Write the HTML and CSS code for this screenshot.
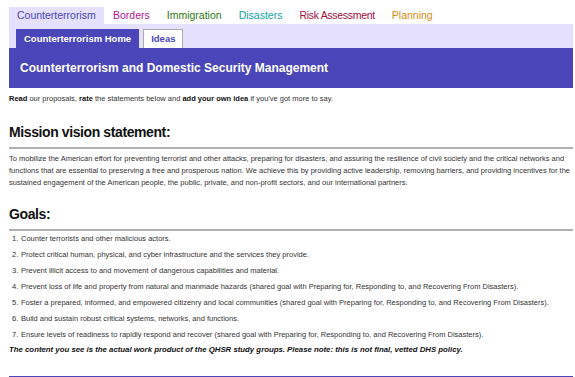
FILE: index.html
```html
<!DOCTYPE html>
<html>
<head>
<meta charset="utf-8">
<link rel="stylesheet" href="styles.css">
</head>
<body>
<div class="page">
  <nav class="topnav">
    <span class="tab active">Counterterrorism</span>
    <span class="tab c-borders">Borders</span>
    <span class="tab c-immig">Immigration</span>
    <span class="tab c-dis">Disasters</span>
    <span class="tab c-risk">Risk Assessment</span>
    <span class="tab c-plan">Planning</span>
  </nav>
  <div class="subnav">
    <span class="subtab current">Counterterrorism Home</span>
    <span class="subtab">Ideas</span>
  </div>
  <div class="banner">Counterterrorism and Domestic Security Management</div>
  <p class="intro"><b>Read</b> our proposals, <b>rate</b> the statements below and <b>add your own idea</b> if you've got more to say.</p>
  <h2 class="heading">Mission vision statement:</h2>
  <p class="mission">To mobilize the American effort for preventing terrorist and other attacks, preparing for disasters, and assuring the resilience of civil society and the critical networks and functions that are essential to preserving a free and prosperous nation. We achieve this by providing active leadership, removing barriers, and providing incentives for the sustained engagement of the American people, the public, private, and non-profit sectors, and our international partners.</p>
  <h2 class="heading goals-h">Goals:</h2>
  <ol class="goals">
    <li>Counter terrorists and other malicious actors.</li>
    <li>Protect critical human, physical, and cyber infrastructure and the services they provide.</li>
    <li>Prevent illicit access to and movement of dangerous capabilities and material.</li>
    <li>Prevent loss of life and property from natural and manmade hazards (shared goal with Preparing for, Responding to, and Recovering From Disasters).</li>
    <li>Foster a prepared, informed, and empowered citizenry and local communities (shared goal with Preparing for, Responding to, and Recovering From Disasters).</li>
    <li>Build and sustain robust critical systems, networks, and functions.</li>
    <li>Ensure levels of readiness to rapidly respond and recover (shared goal with Preparing for, Responding to, and Recovering From Disasters).</li>
  </ol>
  <p class="note">The content you see is the actual work product of the QHSR study groups. Please note: this is not final, vetted DHS policy.</p>
  <div class="bottomline"></div>
</div>
</body>
</html>
```
FILE: styles.css
```css
html, body {
  margin: 0;
  padding: 0;
  background: #fff;
}
body {
  font-family: "Liberation Sans", Arial, sans-serif;
  color: #222;
}
.page {
  margin-left: 9px;
  width: 564px;
}
.topnav {
  display: flex;
  margin-top: 7px;
  height: 17px;
  font-size: 10.5px;
}
.tab {
  padding: 0 8px;
  line-height: 17px;
  margin-left: 1px;
}
.tab.active {
  background: #e4e0fd;
  color: #4a46b9;
  width: 79px;
  margin-left: 0;
}
.c-borders { color: #b0159a; }
.c-immig { color: #2c7a0c; }
.c-dis { color: #10a2a6; }
.c-risk { color: #a30d3a; letter-spacing: -0.3px; }
.c-plan { color: #d48b10; }
.subnav {
  background: #e4e0fd;
  height: 24px;
  display: flex;
  align-items: flex-end;
  padding-left: 7px;
  gap: 4px;
}
.subtab {
  line-height: 18px;
  height: 18px;
  padding: 0 7px;
  font-size: 9.5px;
  font-weight: bold;
  color: #4a46b9;
  background: #fff;
  border: 1px solid #aaa;
  border-bottom: none;
}
.subtab.current {
  background: #4a46b9;
  color: #fff;
  border-color: #4a46b9;
}
.banner {
  background: #4a46b9;
  color: #fff;
  height: 40px;
  line-height: 40px;
  padding-left: 11px;
  font-size: 12px;
  font-weight: bold;
}
.intro {
  margin: 6px 0 0 0;
  font-size: 7.5px;
  line-height: 10px;
  color: #333;
}
.intro b { color: #111; }
.heading {
  font-size: 14px;
  letter-spacing: -0.4px;
  font-weight: bold;
  color: #111;
  margin: 20px 0 0 0;
  padding-bottom: 6px;
  border-bottom: 2px solid #b0b0b0;
  line-height: 17px;
}
.mission {
  margin: 4px 0 0 0;
  font-size: 7.5px;
  line-height: 12px;
  color: #333;
}
.goals-h {
  margin-top: 17px;
}
.goals {
  margin: 0;
  padding-left: 3px;
  list-style: none;
  counter-reset: g;
  font-size: 7.5px;
  color: #333;
}
.goals li {
  counter-increment: g;
  line-height: 16px;
}
.goals li::before {
  content: counter(g) ".";
  display: inline-block;
  width: 9px;
}
.note {
  margin: 0;
  font-size: 7.8px;
  font-weight: bold;
  font-style: italic;
  color: #111;
  line-height: 14px;
}
.bottomline {
  margin-top: 19px;
  border-top: 1px solid #4a46b9;
}
```
